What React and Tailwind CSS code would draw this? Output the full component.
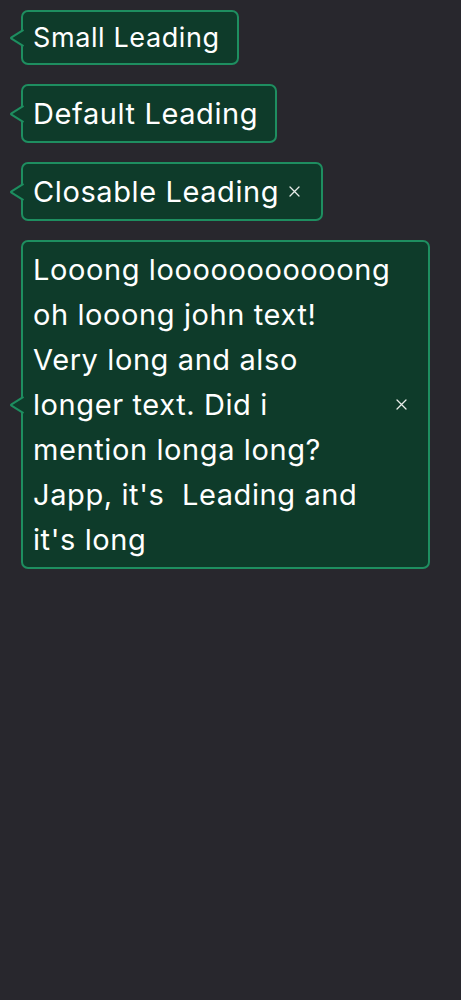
import React from 'react';

const font = { fontFamily: 'Inter, "Noto Sans", sans-serif' };

const longText = [
  'Looong looooooooooong',
  'oh looong john text!',
  'Very long and also',
  'longer text. Did i',
  'mention longa long?',
  "Japp, it's  Leading and",
  "it's long",
].join('\n');

const Arrow = () => (
  <svg
    className="absolute left-[-14px] top-1/2 -translate-y-1/2"
    width="16"
    height="18"
    viewBox="0 0 16 18"
    fill="none"
  >
    <path d="M16 0 L14 0.5 L2 8.2 Q1 9 2 9.8 L14 17.5 L16 18 Z" fill="#0e3b2a" />
    <path d="M14.5 0.8 L2.5 8.3 Q1.4 9 2.5 9.7 L14.5 17.2" stroke="#1e8e60" strokeWidth="2" strokeLinejoin="round" />
  </svg>
);

const CloseIcon = () => (
  <svg width="11" height="11" viewBox="0 0 11 11" className="shrink-0">
    <path d="M1 1 L10 10 M10 1 L1 10" stroke="#e8ece9" strokeWidth="1.3" strokeLinecap="round" />
  </svg>
);

const Tag = ({ children, small, closable, className = '' }) => {
  return (
    <div
      className={
        'relative flex items-center border-2 border-[#1e8e60] bg-[#0e3b2a] rounded-[7px] text-white tracking-[0.6px] py-[5px] pl-[10px] ' +
        (closable ? 'pr-[21px] gap-[10px] ' : 'pr-[17px] ') +
        (small ? 'text-[27px] leading-[41px] ' : 'text-[29px] leading-[45px] ') +
        className
      }
      style={font}
    >
      <Arrow />
      <span>{children}</span>
      {closable && <CloseIcon />}
    </div>
  );
};

export default function App() {
  return (
    <div className="min-h-screen bg-[#28272d] pt-[10px] pl-[21px] flex flex-col items-start gap-[19px]">
      <Tag small>Small Leading</Tag>
      <Tag>Default Leading</Tag>
      <Tag closable>Closable Leading</Tag>
      <Tag closable className="w-[409px] justify-between">
        <span className="block w-[350px] whitespace-pre">{longText}</span>
      </Tag>
    </div>
  );
}
